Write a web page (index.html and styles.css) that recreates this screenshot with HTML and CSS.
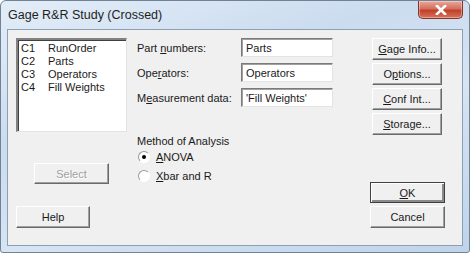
FILE: index.html
```html
<!DOCTYPE html>
<html>

<head>
    <title>Gage R&amp;R Study (Crossed)</title>
    <link rel="stylesheet" href="styles.css">
</head>

<body>
    <div class="window">
        <div class="titlebar">
            <span class="title">Gage R&amp;R Study (Crossed)</span>
            <span class="close">
                <svg width="12" height="10" viewBox="0 0 12 10">
                    <path d="M2 1 L10 9 M10 1 L2 9" stroke="#fff" stroke-width="2.6" stroke-linecap="square"/>
                </svg>
            </span>
        </div>

        <div class="client">
            <!-- column list -->
            <div class="col-left">
                <div class="listbox">
                    <div class="list-row"><span class="col-id">C1</span>RunOrder</div>
                    <div class="list-row"><span class="col-id">C2</span>Parts</div>
                    <div class="list-row"><span class="col-id">C3</span>Operators</div>
                    <div class="list-row"><span class="col-id">C4</span>Fill Weights</div>
                </div>
                <button class="btn btn-select" disabled>Select</button>
                <button class="btn btn-help">Help</button>
            </div>

            <!-- fields -->
            <div class="col-middle">
                <div class="fields">
                    <label>Part <u>n</u>umbers:</label>
                    <div class="textbox">Parts</div>
                    <label>Ope<u>r</u>ators:</label>
                    <div class="textbox">Operators</div>
                    <label>M<u>e</u>asurement data:</label>
                    <div class="textbox">'Fill Weights'</div>
                </div>
                <div class="group-label">Method of Analysis</div>
                <div class="radio-row">
                    <span class="radio checked"></span>
                    <span><u>A</u>NOVA</span>
                </div>
                <div class="radio-row">
                    <span class="radio"></span>
                    <span><u>X</u>bar and R</span>
                </div>
            </div>

            <!-- actions -->
            <div class="col-right">
                <button class="btn btn-side"><u>G</u>age Info...</button>
                <button class="btn btn-side">O<u>p</u>tions...</button>
                <button class="btn btn-side"><u>C</u>onf Int...</button>
                <button class="btn btn-side"><u>S</u>torage...</button>
                <button class="btn btn-ok"><u>O</u>K</button>
                <button class="btn btn-cancel">Cancel</button>
            </div>
        </div>
    </div>
</body>

</html>
```

FILE: styles.css
```css
body {
    margin: 0;
    font-family: 'Liberation Sans', Arial, sans-serif;
    font-size: 11px;
    color: #1a1a1a;
    background: #fff;
}

/* Window frame */
.window {
    width: 470px;
    height: 253px;
    box-sizing: border-box;
    border: 1px solid #6f8296;
    border-radius: 6px 6px 3px 3px;
    background: linear-gradient(160deg, #e3edf8 0%, #cbdcef 35%, #d6e4f3 60%, #bfd3ea 100%);
    overflow: hidden;
}

.titlebar {
    height: 28px;
    display: flex;
    align-items: flex-start;
    justify-content: space-between;
}

.title {
    margin: 7px 0 0 7px;
    font-size: 12.5px;
    color: #1e1e1e;
}

.close {
    width: 45px;
    height: 18px;
    margin-right: 6px;
    display: flex;
    align-items: center;
    justify-content: center;
    box-sizing: border-box;
    border: 1px solid #84362a;
    border-top: none;
    border-radius: 0 0 5px 5px;
    background: linear-gradient(to bottom, #e9a99b 0%, #d4705d 45%, #c0402a 55%, #d8735a 100%);
    box-shadow: inset 0 0 0 1px rgba(255, 255, 255, 0.35);
}

/* Client area */
.client {
    margin: 0 6px;
    height: 217px;
    box-sizing: border-box;
    padding: 8px 0 0 8px;
    border: 1px solid #8b9fb5;
    background: #f0f0f0;
    display: flex;
}

.col-left {
    width: 111px;
    display: flex;
    flex-direction: column;
    align-items: flex-start;
}

.listbox {
    width: 111px;
    height: 94px;
    box-sizing: border-box;
    padding: 2px 0 0 2px;
    background: #fff;
    border-top: 2px solid #828282;
    border-left: 2px solid #828282;
    border-right: 1px solid #e3e3e3;
    border-bottom: 1px solid #e3e3e3;
    box-shadow: inset 1px 1px 0 #404040;
}

.list-row {
    height: 13px;
    line-height: 13px;
    padding-left: 1px;
}

.col-id {
    display: inline-block;
    width: 27px;
}

.col-middle {
    width: 196px;
    margin-left: 10px;
}

.fields {
    display: grid;
    grid-template-columns: 104px 92px;
    grid-auto-rows: 19px;
    row-gap: 6px;
    align-items: center;
}

.textbox {
    height: 19px;
    box-sizing: border-box;
    padding: 3px 0 0 4px;
    background: #fff;
    border-top: 1px solid #7a7a7a;
    border-left: 1px solid #7a7a7a;
    border-right: 1px solid #e3e3e3;
    border-bottom: 1px solid #e3e3e3;
    box-shadow: inset 1px 1px 0 #a0a0a0;
}

.group-label {
    margin-top: 27px;
    height: 14px;
    line-height: 14px;
}

.radio-row {
    height: 18px;
    display: flex;
    align-items: center;
    margin-left: 1px;
}

.radio-row + .radio-row {
    margin-top: 1px;
}

/* classic radio: dark arc top-left, white bottom-right */
.radio {
    width: 12px;
    height: 12px;
    box-sizing: border-box;
    margin-right: 6px;
    border-radius: 50%;
    border: 1px solid;
    border-color: #9a9a9a #fff #fff #9a9a9a;
    background: #fff;
    position: relative;
}

.radio.checked::after {
    content: "";
    position: absolute;
    left: 3px;
    top: 3px;
    width: 4px;
    height: 4px;
    border-radius: 50%;
    background: #000;
}

.col-right {
    width: 75px;
    margin-left: 37px;
    display: flex;
    flex-direction: column;
    align-items: flex-start;
}

/* Buttons */
.btn {
    font-family: inherit;
    font-size: 11px;
    color: #1a1a1a;
    padding: 0;
    box-sizing: border-box;
    background: #f0f0f0;
    border: 1px solid;
    border-color: #fff #696969 #696969 #fff;
    box-shadow: inset -1px -1px 0 #a0a0a0;
}

.btn-side {
    width: 70px;
    height: 22px;
    margin-left: 2px;
    margin-bottom: 3px;
}

.btn-select {
    width: 75px;
    height: 21px;
    margin: 31px 0 0 18px;
    color: #a0a0a0;
    text-shadow: 1px 1px 0 #fff;
}

.btn-help {
    width: 74px;
    height: 22px;
    margin-top: 22px;
}

.btn-ok {
    width: 75px;
    height: 21px;
    margin-top: 44px;
    border-color: #404040;
    box-shadow: inset 1px 1px 0 #fff, inset -2px -2px 0 #8a8a8a;
}

.btn-cancel {
    width: 75px;
    height: 22px;
    margin-top: 3px;
}
```
